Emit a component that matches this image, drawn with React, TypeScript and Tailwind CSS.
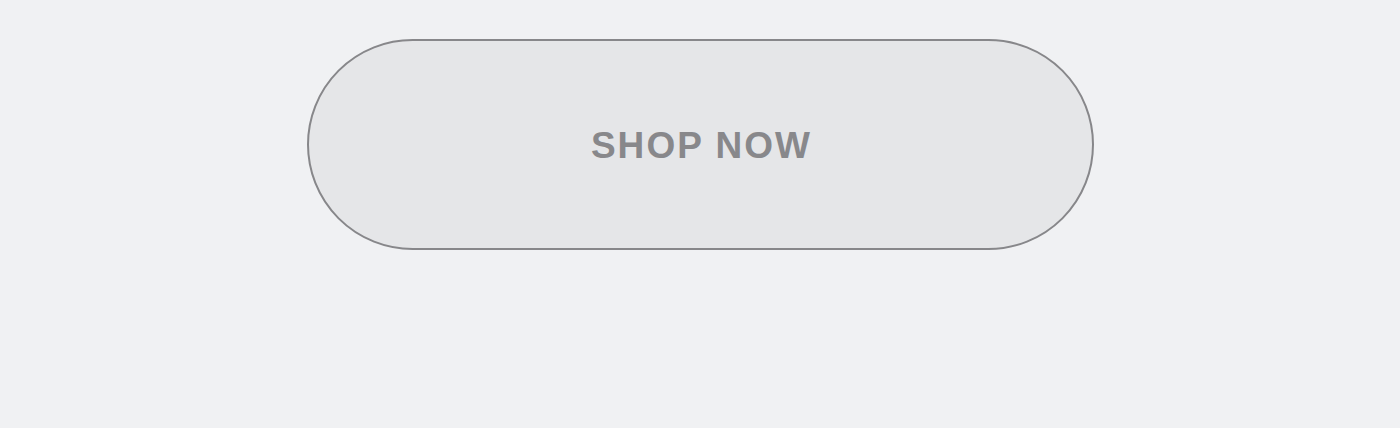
export default function App() {
  return (
    <div className="w-[1400px] h-[428px] bg-[#f0f1f3] flex justify-center pt-[39px]" style={{ fontFamily: '"Liberation Sans", Arial, sans-serif' }}>
      <button className="w-[787px] h-[211px] rounded-full border-[2.5px] border-[#87878a] bg-[#e5e6e8] flex items-center justify-center text-[#88888b] text-[37px] font-bold tracking-[0.055em] pl-[3px] pt-[3px]">
        SHOP NOW
      </button>
    </div>
  );
}
